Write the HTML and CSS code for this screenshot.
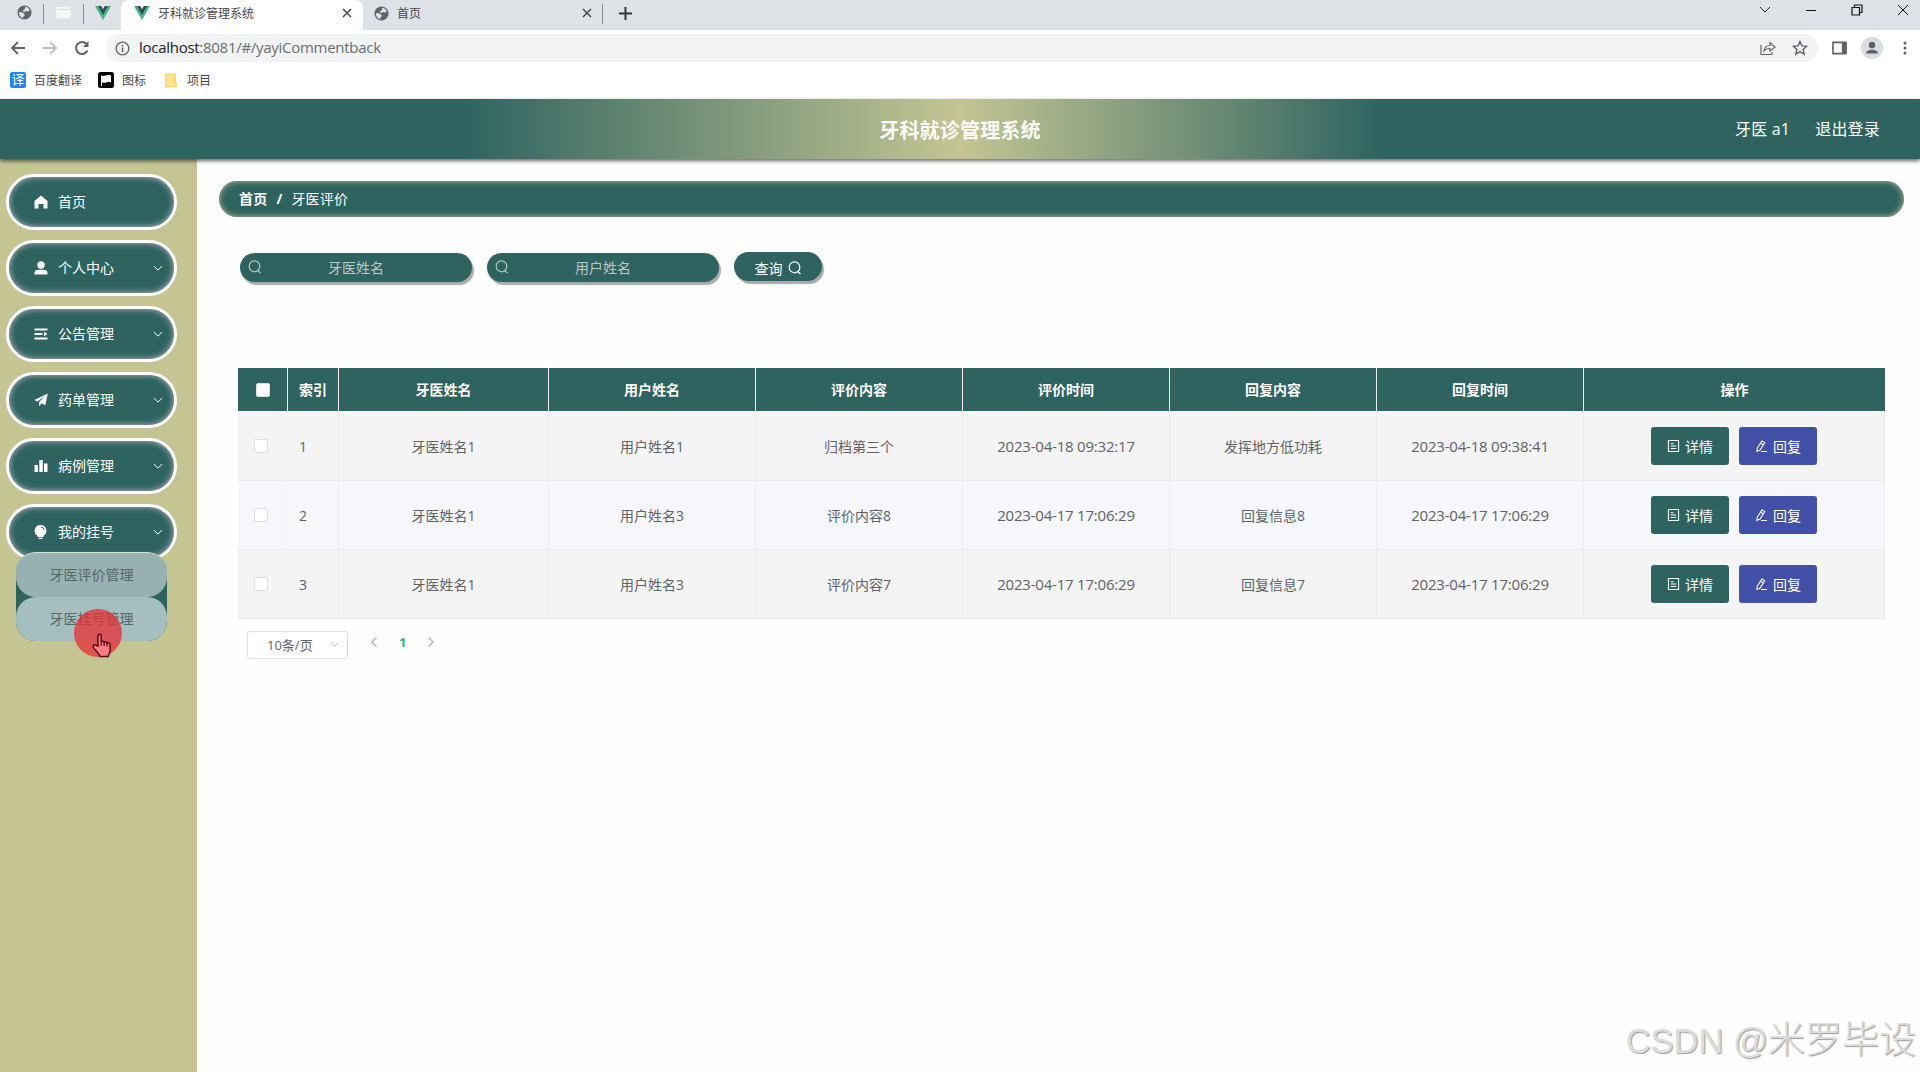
FILE: index.html
```html
<!DOCTYPE html>
<html lang="zh-CN">
<head>
    <meta charset="UTF-8">
    <meta name="viewport" content="width=device-width, initial-scale=1.0">
    <title>牙科就诊管理系统</title>
    <link rel="stylesheet" href="styles.css">
</head>
<body>
    <!-- shared icons -->
    <svg class="sprite">
        <symbol id="globe" viewBox="0 0 16 16"><circle cx="8" cy="8" r="7.500" fill="#5f6368"/><path d="M2 7.500l4 .500 2 1.500v2l-1.500 1v1.500C3.500 13 2 11 2 7.500zM9 1.800c2.500.500 4 2 4.700 4.200l-2.200 1-2-.5-2 1.200-1.500-2 2-.700z" fill="#dee1e6"/></symbol>
        <symbol id="vue" viewBox="0 0 16 14"><path d="M0 0h3.500L8 8l4.500-8H16L8 14z" fill="#41b883"/><path d="M3 0h3.200L8 3.200 9.800 0H13L8 9z" fill="#35495e"/></symbol>
        <symbol id="close" viewBox="0 0 10 10"><path d="M1 1l8 8M9 1l-8 8" fill="none" stroke="currentColor" stroke-width="1.500"/></symbol>
        <symbol id="down" viewBox="0 0 12 8"><path d="M1 1l5 5 5-5" fill="none" stroke="currentColor" stroke-width="1.200"/></symbol>
        <symbol id="search" viewBox="0 0 14 14"><ellipse cx="6.500" cy="6.300" rx="5.300" ry="5.500" fill="none" stroke="currentColor" stroke-width="1.200"/><path d="M9.500 10.500l3 2.500" stroke="currentColor" stroke-width="1.200"/></symbol>
        <symbol id="doc" viewBox="0 0 14 14"><path d="M1.500 1h11v12h-11zM4 4.500h3M4 7h6M4 9.800h6" fill="none" stroke="currentColor" stroke-width="1.100"/></symbol>
        <symbol id="edit" viewBox="0 0 14 14"><path d="M7.500 1.500l3 1.800-5 8-3.500 1.500.400-3.500zM6 4l3 1.800M6.500 13h6.500" fill="none" stroke="currentColor" stroke-width="1.100"/></symbol>
    </svg>

    <div class="tab-strip">
        <div class="pinned-tabs">
            <svg class="tab-globe"><use href="#globe"/></svg>
            <span class="tab-line"></span>
            <svg class="window-icon" viewBox="0 0 16 14"><path d="M.5.500h15v12H.500z" fill="#f5f5f4" stroke="#e5e8e8"/><path d="M1 3.500h14" stroke="#cfe5da"/></svg>
            <span class="tab-line"></span>
            <svg class="tab-vue"><use href="#vue"/></svg>
        </div>
        <div class="tab active-tab">
            <svg class="tab-vue"><use href="#vue"/></svg>
            <span class="tab-title">牙科就诊管理系统</span>
            <svg class="tab-close"><use href="#close"/></svg>
        </div>
        <div class="tab">
            <svg class="tab-globe"><use href="#globe"/></svg>
            <span class="tab-title">首页</span>
            <svg class="tab-close"><use href="#close"/></svg>
        </div>
        <span class="tab-line"></span>
        <svg class="new-tab" viewBox="0 0 12 12"><path d="M6 0v12M0 6h12" stroke="#333" stroke-width="1.800"/></svg>
        <div class="window-buttons">
            <svg viewBox="0 0 12 12"><path d="M1 3l5 5 5-5" fill="none" stroke="#222"/></svg>
            <svg viewBox="0 0 12 12"><path d="M1 6.500h10" stroke="#111"/></svg>
            <svg viewBox="0 0 12 12"><path d="M1 3.500h7.500V11H1zM3.500 3.500V1H11v7.500H8.500" fill="none" stroke="#111" stroke-width="1.200"/></svg>
            <svg viewBox="0 0 12 12"><path d="M1 1l10 10M11 1L1 11" stroke="#111"/></svg>
        </div>
    </div>

    <div class="toolbar">
        <svg class="nav-icon" viewBox="0 0 16 16"><path d="M15 8H2M8 2L2 8l6 6" fill="none" stroke="#5f6368" stroke-width="1.800"/></svg>
        <svg class="nav-icon" viewBox="0 0 16 16"><path d="M1 8h13M8 2l6 6-6 6" fill="none" stroke="#bbbdc0" stroke-width="1.800"/></svg>
        <svg class="nav-icon" viewBox="0 0 16 16"><path d="M13.500 10.500A6 6 0 1 1 12.500 4" fill="none" stroke="#5f6368" stroke-width="2"/><path d="M14.500 1v6H9z" fill="#5f6368"/></svg>
        <div class="address">
            <svg class="info-icon" viewBox="0 0 16 16"><circle cx="8" cy="8" r="6.800" fill="none" stroke="#5f6368" stroke-width="1.400"/><path d="M8 7v5M8 4v1.800" stroke="#5f6368" stroke-width="1.600"/></svg>
            <span class="url"><b>localhost</b>:8081/#/yayiCommentback</span>
            <svg class="share-icon" viewBox="0 0 16 16"><path d="M1 5v9.500h11V12M4 11c.5-4 3-5.500 6-5.500V2.500L15 7l-5 4V8.500c-3 0-4.500.500-6 2.500z" fill="none" stroke="#5f6368" stroke-width="1.200"/></svg>
            <svg class="star-icon" viewBox="0 0 16 16"><path d="M8 1.500l1.900 4.400 4.800.400-3.600 3.200 1.100 4.700L8 11.700l-4.200 2.500 1.100-4.700L1.300 6.300l4.800-.4z" fill="none" stroke="#5f6368" stroke-width="1.400"/></svg>
        </div>
        <svg class="panel-icon" viewBox="0 0 16 14"><path d="M1 1h14v12H1z" fill="none" stroke="#5f6368" stroke-width="1.700"/><path d="M10.500 1H15v12h-4.500z" fill="#5f6368"/></svg>
        <svg class="avatar" viewBox="0 0 22 22"><circle cx="11" cy="11" r="11" fill="#dadce2"/><circle cx="11" cy="8" r="3.200" fill="#5a606b"/><path d="M5 16.500c0-5 12-5 12 0z" fill="#5a606b"/></svg>
        <svg class="dots" viewBox="0 0 4 14"><circle cx="2" cy="2" r="1.500"/><circle cx="2" cy="7" r="1.500"/><circle cx="2" cy="12" r="1.500"/></svg>
    </div>

    <div class="bookmarks">
        <span class="fanyi-icon">译</span><span class="bookmark-text">百度翻译</span>
        <svg class="flag-icon" viewBox="0 0 16 16"><rect width="16" height="16" rx="2.500"/><path d="M3 14V3.500c3 1.500 6-1.500 10 0v7c-3.500-1.500-6 1.500-9-.2V14z" fill="#fff"/></svg><span class="bookmark-text">图标</span>
        <svg class="folder-icon" viewBox="0 0 13 15"><path d="M.5.500h11v10h1v4H.500z" fill="#fce38a" stroke="#f1cf5b"/></svg><span class="bookmark-text">项目</span>
    </div>

    <div class="header">
        <h1>牙科就诊管理系统</h1>
        <div class="header-right">
            <span>牙医 a1</span>
            <span>退出登录</span>
        </div>
    </div>

    <div class="container">
        <div class="sidebar">
            <div class="menu-item">
                <svg class="menu-icon" viewBox="0 0 14 14"><path d="M7 .500L13.500 6v7.500h-4V9h-5v4.500h-4V6z"/></svg>
                <span>首页</span>
            </div>
            <div class="menu-item">
                <svg class="menu-icon" viewBox="0 0 14 14"><circle cx="7" cy="4" r="3.700"/><path d="M.5 13.500V12c0-2.500 2-3.200 4-3.200h5c2 0 4 .700 4 3.200v1.500z"/></svg>
                <span>个人中心</span>
                <svg class="menu-arrow"><use href="#down"/></svg>
            </div>
            <div class="menu-item">
                <svg class="menu-icon" viewBox="0 0 14 14"><path d="M.5 1.500h13v2H.500zM.5 6h8v2h-8zM.5 10.500h13v2H.500zM10 4.700L13.500 7 10 9.300z"/></svg>
                <span>公告管理</span>
                <svg class="menu-arrow"><use href="#down"/></svg>
            </div>
            <div class="menu-item">
                <svg class="menu-icon" viewBox="0 0 14 14"><path d="M13.800.400L.300 7l3.200 1.500L11 3 5.200 9v4.500l2.300-3.200 3.800 2z"/></svg>
                <span>药单管理</span>
                <svg class="menu-arrow"><use href="#down"/></svg>
            </div>
            <div class="menu-item">
                <svg class="menu-icon" viewBox="0 0 14 14"><path d="M.5 6h3.500v7H.500zM5.300 1h3.500v12H5.300zM10 4.500h3.500V13H10z"/></svg>
                <span>病例管理</span>
                <svg class="menu-arrow"><use href="#down"/></svg>
            </div>
            <div class="menu-item">
                <svg class="menu-icon" viewBox="0 0 14 14"><path d="M6.500 0a5.800 5.800 0 0 1 3 10.800V12h-6v-1.200A5.800 5.800 0 0 1 6.500 0zM4.500 12.700h4V14h-4z"/><path d="M7 2a3.500 3.500 0 0 1 3.200 3" fill="none" stroke="#2f6460"/></svg>
                <span>我的挂号</span>
                <svg class="menu-arrow"><use href="#down"/></svg>
            </div>
            <div class="submenu">
                <div class="submenu-item">牙医评价管理</div>
                <div class="submenu-item hovered">牙医挂号管理</div>
                <div class="pointer">
                    <svg viewBox="0 0 20 25"><path d="M6 13V3c0-2.500 3.200-2.500 3.200 0v6c.5-1 2.800-1 3 .5.7-1 2.700-.6 2.900.7.900-.9 3-.4 3 1.300V17c0 3-1.500 4-1.800 6.500H8C7.500 20.500 3.500 18 1.500 14.500 0 12 3 11 4 12.300z" fill="#ff7d85" stroke="#5b0b14" stroke-width="1.500"/><path d="M9.200 9v4M12.200 9.500V13M15.100 10.200V13.500" stroke="#5b0b14" stroke-width="1.200"/></svg>
                </div>
            </div>
        </div>

        <div class="main">
            <div class="breadcrumb"><b>首页</b><b class="slash">/</b><span>牙医评价</span></div>

            <div class="search-bar">
                <div class="search-input"><svg><use href="#search"/></svg><span>牙医姓名</span></div>
                <div class="search-input"><svg><use href="#search"/></svg><span>用户姓名</span></div>
                <button class="search-btn">查询<svg><use href="#search"/></svg></button>
            </div>

            <table>
                <colgroup>
                    <col class="col-check"><col class="col-index"><col class="col-first"><col><col><col><col><col><col class="col-action">
                </colgroup>
                <thead>
                    <tr>
                        <th class="check"><i class="checkbox"></i></th>
                        <th>索引</th>
                        <th>牙医姓名</th>
                        <th>用户姓名</th>
                        <th>评价内容</th>
                        <th>评价时间</th>
                        <th>回复内容</th>
                        <th>回复时间</th>
                        <th>操作</th>
                    </tr>
                </thead>
                <tbody>
                    <tr>
                        <td class="check"><i class="checkbox"></i></td>
                        <td class="index">1</td>
                        <td>牙医姓名1</td>
                        <td>用户姓名1</td>
                        <td>归档第三个</td>
                        <td class="date">2023-04-18 09:32:17</td>
                        <td>发挥地方低功耗</td>
                        <td class="date">2023-04-18 09:38:41</td>
                        <td><div class="actions"><button class="btn detail"><svg><use href="#doc"/></svg>详情</button><button class="btn reply"><svg><use href="#edit"/></svg>回复</button></div></td>
                    </tr>
                    <tr class="current">
                        <td class="check"><i class="checkbox"></i></td>
                        <td class="index">2</td>
                        <td>牙医姓名1</td>
                        <td>用户姓名3</td>
                        <td>评价内容8</td>
                        <td class="date">2023-04-17 17:06:29</td>
                        <td>回复信息8</td>
                        <td class="date">2023-04-17 17:06:29</td>
                        <td><div class="actions"><button class="btn detail"><svg><use href="#doc"/></svg>详情</button><button class="btn reply"><svg><use href="#edit"/></svg>回复</button></div></td>
                    </tr>
                    <tr>
                        <td class="check"><i class="checkbox"></i></td>
                        <td class="index">3</td>
                        <td>牙医姓名1</td>
                        <td>用户姓名3</td>
                        <td>评价内容7</td>
                        <td class="date">2023-04-17 17:06:29</td>
                        <td>回复信息7</td>
                        <td class="date">2023-04-17 17:06:29</td>
                        <td><div class="actions"><button class="btn detail"><svg><use href="#doc"/></svg>详情</button><button class="btn reply"><svg><use href="#edit"/></svg>回复</button></div></td>
                    </tr>
                </tbody>
            </table>

            <div class="pagination">
                <div class="page-size"><span>10条/页</span><svg><use href="#down"/></svg></div>
                <svg class="page-arrow" viewBox="0 0 8 12"><path d="M6.500 1.500L2 6l4.500 4.500" fill="none" stroke="#b5b9c0" stroke-width="1.500"/></svg>
                <b>1</b>
                <svg class="page-arrow" viewBox="0 0 8 12"><path d="M1.500 1.500L6 6l-4.500 4.500" fill="none" stroke="#b5b9c0" stroke-width="1.500"/></svg>
            </div>
        </div>
    </div>

    <div class="watermark"><span>CSDN @</span>米罗毕设</div>
</body>
</html>
```

FILE: styles.css
```css
* {
    margin: 0;
    padding: 0;
    box-sizing: border-box;
}

body {
    width: 1920px;
    height: 1072px;
    overflow: hidden;
    background-color: #fefefe;
    font-family: "Open Sans", "Noto Sans CJK SC", sans-serif;
    font-size: 14px;
    color: #606266;
    position: relative;
}

svg {
    display: block;
    flex-shrink: 0;
}

button {
    font-family: inherit;
    border: none;
}

.sprite {
    position: absolute;
    width: 0;
    height: 0;
}

/* browser window */
.tab-strip {
    display: flex;
    height: 30px;
    background-color: #dee1e6;
    font-size: 12px;
    color: #45484c;
}

.pinned-tabs {
    display: flex;
    width: 121px;
    padding-left: 17px;
    padding-top: 5px;
}

.pinned-tabs .tab-line {
    margin: 0 11px;
    margin-top: -1px;
}

.pinned-tabs .tab-vue {
    margin-top: 1px;
}

.tab-line {
    width: 1px;
    height: 20px;
    margin-top: 4px;
    background-color: #8b8e92;
}

.tab-globe {
    width: 15px;
    height: 15px;
}

.window-icon {
    width: 17px;
    height: 14px;
    margin-top: 1px;
}

.tab-vue {
    width: 16px;
    height: 14px;
}

.tab {
    display: flex;
    align-items: center;
    width: 239px;
    padding: 0 10px 4px 11px;
}

.active-tab {
    width: 242px;
    padding: 0 11px 4px 13px;
    background-color: #fff;
    border-radius: 8px 8px 0 0;
}

.tab-title {
    margin-left: 8px;
    flex: 1;
}

.tab-close {
    width: 10px;
    height: 10px;
}

.new-tab {
    width: 13px;
    height: 13px;
    margin: 7px 0 0 16px;
}

.window-buttons {
    display: flex;
    gap: 34px;
    margin: 4px 11px 0 auto;
}

.window-buttons svg {
    width: 12px;
    height: 12px;
}

.toolbar {
    display: flex;
    align-items: center;
    height: 36px;
    padding: 0 13px 0 10px;
    background-color: #fff;
}

.nav-icon {
    width: 16px;
    height: 16px;
    margin-right: 16px;
}

.address {
    display: flex;
    align-items: center;
    width: 1712px;
    height: 28px;
    padding: 0 10px 0 9px;
    border-radius: 14px;
    background-color: #f1f3f4;
}

.info-icon {
    width: 15px;
    height: 15px;
}

.url {
    flex: 1;
    margin-left: 9px;
    padding-bottom: 2px;
    font-size: 15px;
    letter-spacing: -0.28px;
    color: #6a6e73;
}

.url b {
    font-weight: normal;
    color: #202124;
}

.share-icon {
    width: 16px;
    height: 16px;
    margin-right: 16px;
}

.star-icon {
    width: 16px;
    height: 16px;
}

.panel-icon {
    width: 15px;
    height: 14px;
    margin-left: 14px;
}

.avatar {
    width: 22px;
    height: 22px;
    margin-left: 14px;
}

.dots {
    width: 4px;
    height: 14px;
    margin-left: 20px;
    fill: #5f6368;
}

.bookmarks {
    display: flex;
    align-items: center;
    height: 33px;
    padding-left: 10px;
    padding-bottom: 5px;
    background-color: #fff;
    font-size: 12px;
    color: #45484c;
}

.bookmark-text {
    margin: 0 16px 0 8px;
}

.fanyi-icon {
    width: 16px;
    height: 16px;
    border-radius: 2px;
    background-color: #1d87f0;
    color: #fff;
    font-size: 13px;
    line-height: 15px;
    text-align: center;
}

.flag-icon {
    width: 16px;
    height: 16px;
}

.folder-icon {
    width: 12px;
    height: 15px;
    margin: 0 2px 0 3px;
}

/* page header */
.header {
    display: flex;
    align-items: center;
    justify-content: center;
    height: 60px;
    position: relative;
    z-index: 2;
    color: #fff;
    background: linear-gradient(90deg, #2e6360 24%, #c4c593 50%, #2e6360 72%);
    box-shadow: 0 2px 4px rgba(0, 0, 0, 0.6);
}

.header h1 {
    padding-top: 1px;
    font-size: 20px;
    letter-spacing: 0.2px;
}

.header-right {
    position: absolute;
    right: 40px;
    display: flex;
    gap: 25px;
    padding-bottom: 2px;
    font-size: 16px;
    letter-spacing: 0.2px;
}

.container {
    display: flex;
    height: 913px;
}

/* side menu */
.sidebar {
    width: 197px;
    padding: 15px 20px 0 6px;
    background-color: #c4c593;
}

.menu-item {
    display: flex;
    align-items: center;
    height: 56px;
    margin-bottom: 10px;
    padding: 0 11px 0 25px;
    border: 3px solid #fff;
    border-radius: 28px;
    background-color: #2e6360;
    box-shadow: inset 0 0 6px #c0b8c0;
    color: #fff;
}

.menu-item span {
    padding-bottom: 2px;
}

.menu-icon {
    width: 14px;
    height: 14px;
    margin-right: 10px;
    fill: #fff;
}

.menu-arrow {
    width: 10px;
    height: 7px;
    margin-left: auto;
}

.submenu {
    position: relative;
    width: 151px;
    margin: -18px 0 0 10px;
    border-radius: 20px;
    background-color: #2e6360;
}

.submenu-item {
    height: 44px;
    border-radius: 20px;
    line-height: 43px;
    text-align: center;
    color: #53686a;
    background-color: #96b1b0;
}

.submenu-item:first-child {
    border-top: 1px solid #d5e3d5;
    height: 45px;
}

.submenu-item.hovered {
    background-color: #a5bec0;
}

.pointer {
    position: absolute;
    left: 58px;
    top: 57px;
    width: 48px;
    height: 48px;
    border-radius: 50%;
    background-color: rgba(229, 47, 54, 0.76);
}

.pointer svg {
    width: 20px;
    height: 25px;
    margin: 24px 0 0 18px;
}

/* content */
.main {
    flex: 1;
    padding: 22px 16px 0 22px;
}

.breadcrumb {
    display: flex;
    align-items: center;
    height: 36px;
    padding: 0 20px 2px;
    border-radius: 18px;
    background-color: #2e6360;
    box-shadow: inset 0 0 6px #c4c593;
    color: #fff;
    letter-spacing: 0.2px;
}

.slash {
    margin: 0 9px;
}

.search-bar {
    display: flex;
    gap: 15px;
    padding: 36px 0 0 21px;
}

.search-input {
    display: flex;
    align-items: center;
    width: 232px;
    height: 29px;
    padding: 0 22px 2px 8px;
    border-radius: 15px;
    background-color: #2e6360;
    box-shadow: 2px 3px 1px #aaaaad;
    color: #b7c9c8;
}

.search-input svg {
    width: 14px;
    height: 14px;
}

.search-input span {
    flex: 1;
    text-align: center;
}

.search-btn {
    display: flex;
    align-items: center;
    justify-content: center;
    gap: 5px;
    width: 88px;
    height: 29px;
    margin-top: -1px;
    padding-top: 3px;
    border-radius: 15px;
    background-color: #2e6360;
    box-shadow: 2px 3px 1px #aaaaad;
    color: #fff;
    font-size: 14px;
}

.search-btn svg {
    width: 14px;
    height: 14px;
}

table {
    width: 1647px;
    margin: 86px 0 0 19px;
    table-layout: fixed;
    border-collapse: separate;
    border-spacing: 0;
    text-align: center;
}

.col-check {
    width: 50px;
}

.col-index {
    width: 51px;
}

.col-first {
    width: 210px;
}

.col-action {
    width: 301px;
}

th {
    height: 43px;
    padding-bottom: 2px;
    border-right: 1px solid #e9efee;
    background-color: #2e6360;
    color: #fff;
}

th.check {
    padding-bottom: 0;
}

th:last-child {
    border-right: none;
}

td {
    height: 69px;
    border-right: 1px solid #ebedf0;
    border-bottom: 1px solid #e9ebef;
    background-color: #f4f4f5;
}

tbody tr:first-child td {
    height: 70px;
    padding-top: 1px;
}

.current td {
    background-color: #f5f7fa;
}

td.check {
    border-right-color: #f2f3f5;
}

td.index {
    padding-left: 11px;
    text-align: left;
}

.date {
    font-size: 15px;
    letter-spacing: -0.2px;
}

.checkbox {
    display: block;
    width: 14px;
    height: 14px;
    margin-left: 16px;
    border: 1px solid #dcdfe6;
    border-radius: 2px;
    background-color: #fff;
}

th .checkbox {
    margin-left: 18px;
}

.actions {
    display: flex;
    justify-content: center;
    gap: 10px;
}

.btn {
    display: flex;
    align-items: center;
    justify-content: center;
    gap: 5px;
    width: 78px;
    height: 38px;
    border-radius: 3px;
    color: #fff;
    font-size: 14px;
}

.btn svg {
    width: 13px;
    height: 14px;
}

.detail {
    background-color: #2e6360;
}

.reply {
    background-color: #4250a8;
}

.pagination {
    display: flex;
    padding: 12px 0 0 28px;
    font-size: 13px;
}

.page-size {
    display: flex;
    align-items: center;
    justify-content: space-between;
    width: 101px;
    height: 28px;
    padding: 0 7px 2px 19px;
    border: 1px solid #dcdfe6;
    border-radius: 3px;
    background-color: #fff;
}

.page-size svg {
    width: 10px;
    height: 7px;
    color: #c0c4cc;
}

.page-arrow {
    width: 8px;
    height: 12px;
    margin-top: 5px;
}

.page-size + .page-arrow {
    margin-left: 22px;
}

.pagination b {
    margin: 2px 21px 0;
    color: #2cb78c;
}

.watermark {
    position: absolute;
    right: 4px;
    bottom: 8px;
    font-family: "Liberation Sans", "Noto Sans CJK SC", sans-serif;
    font-size: 37px;
    font-weight: 300;
    color: #dcdcdd;
    text-shadow: 1px 1px 1px #999;
}

.watermark span {
    font-size: 34.500px;
}
```
